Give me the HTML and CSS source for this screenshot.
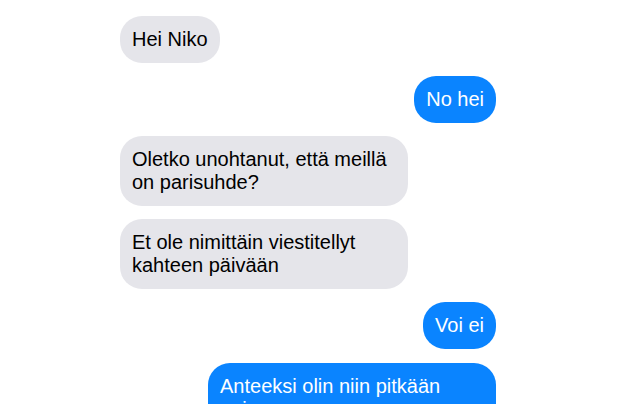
FILE: index.html
```html
<!DOCTYPE html>
<html lang="fi">
<head>
    <meta charset="UTF-8">
    <meta name="viewport" content="width=device-width, initial-scale=1.0">
    <title>Viestit</title>
    <link rel="stylesheet" href="styles.css">
</head>
<body>

<div class="chat">
    <div class="msg them">Hei Niko</div>
    <div class="msg me">No hei</div>
    <div class="msg them">Oletko unohtanut, että meillä on parisuhde?</div>
    <div class="msg them">Et ole nimittäin viestitellyt kahteen päivään</div>
    <div class="msg me">Voi ei</div>
    <div class="msg me">Anteeksi olin niin pitkään poissa</div>
</div>

</body>
</html>
```

FILE: styles.css
```css
body {
    font-family: "Liberation Sans", Arial, sans-serif;
    margin: 0;
    background-color: #fff;
    overflow: hidden;
}
.chat {
    width: 376px;
    margin-left: 120px;
    padding-top: 16px;
    display: flex;
    flex-direction: column;
    gap: 13px;
}
.msg {
    max-width: 264px;
    padding: 12px;
    border-radius: 22px;
    font-size: 20px;
    line-height: 23px;
}
.them {
    align-self: flex-start;
    background-color: #e5e5ea;
    color: #000;
}
.me {
    align-self: flex-end;
    background-color: #0a84ff;
    color: #fff;
}
.me:last-child {
    margin-top: 1px;
}
```
